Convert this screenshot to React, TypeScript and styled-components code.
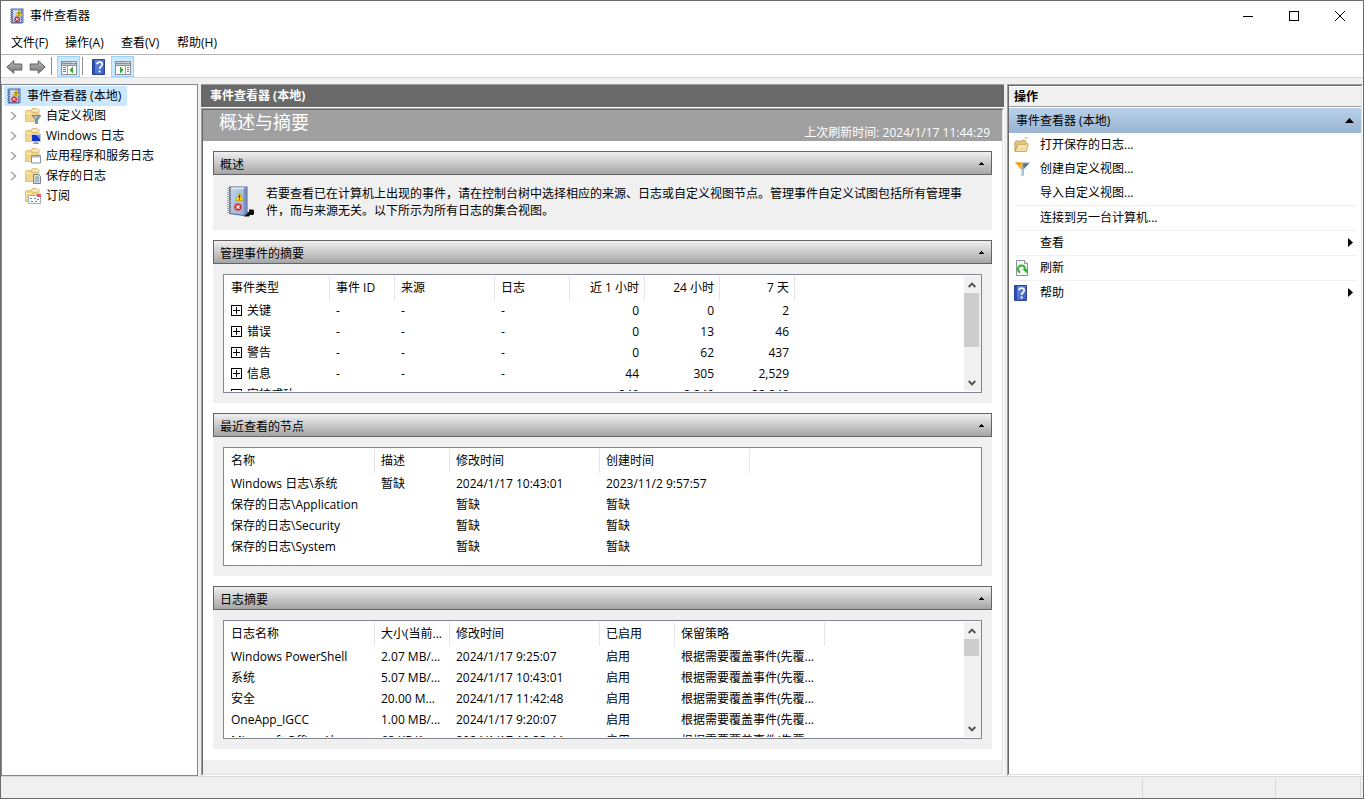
import React from "react";
import styled, { createGlobalStyle, css } from "styled-components";

const Global = createGlobalStyle`
  *, *::before, *::after { box-sizing: border-box; }
  html, body { margin: 0; padding: 0; background: #f0f0f0; }
  body, button {
    font-family: "Open Sans", "Noto Sans CJK SC", sans-serif;
    font-size: 12px;
    line-height: 16px;
    color: #000;
  }
  button { margin: 0; padding: 0; border: 0; background: none; text-align: left; cursor: default; }
  ul { margin: 0; padding: 0; list-style: none; }
  h1, h2, p { margin: 0; font-size: 12px; font-weight: 400; }
  svg { display: block; flex: none; }
`;

const Window = styled.div`
  display: flex;
  flex-direction: column;
  min-height: 100vh;
  border: 1px solid #6b6b6b;
  background: #f0f0f0;
`;

const TitleBar = styled.header`
  display: flex;
  align-items: center;
  height: 30px;
  background: #fff;
  padding-left: 8px;
`;

const Title = styled.h1`
  flex: 1;
  padding-left: 5px;
`;

const CaptionButton = styled.button`
  display: flex;
  align-items: center;
  justify-content: center;
  width: 46px;
  height: 28px;
`;

const MenuBar = styled.nav`
  display: flex;
  align-items: center;
  height: 23px;
  padding-left: 2px;
  background: #fff;
`;

const MenuItem = styled.button`
  width: 56px;
  padding-left: 8px;
  &:first-child { width: 54px; }
`;

const ToolBar = styled.div`
  display: flex;
  align-items: flex-end;
  height: 24px;
  padding-left: 2px;
  background: #fff;
  border-top: 1px solid #b4b4b4;
  border-bottom: 1px solid #dadada;
`;

const ToolButton = styled.button<{ $active?: boolean; $wide?: boolean }>`
  display: flex;
  align-items: center;
  justify-content: center;
  width: ${(p) => (p.$wide ? 24 : 23)}px;
  height: 21px;
  ${(p) => p.$active && css`
    padding-top: 3px;
    background: #cce8ff;
    border: 1px solid #99d1ff;
  `}
`;

const ToolDivider = styled.span<{ $right: number }>`
  width: 1px;
  height: 18px;
  margin: 0 ${(p) => p.$right}px 2px 2px;
  background: #8c8c8c;
`;

const Main = styled.main`
  display: grid;
  grid-template-columns: 197px minmax(0, 1fr) 355px;
  column-gap: 3px;
  flex: 1;
  padding: 6px 1px 0 0;
`;

const TreePane = styled.nav`
  padding: 1px 2px;
  background: #fff;
  border: 1px solid #828790;
`;

const TreeItem = styled.button<{ $root?: boolean }>`
  display: flex;
  align-items: center;
  height: 20px;
  gap: 5px;
  ${(p) => p.$root
    ? css`padding: 0 6px 0 2px; background: #cce8ff;`
    : css`padding: 0 4px 0 3px;`}
`;

const Twisty = styled.span`
  width: 13px;
  flex: none;
  padding-left: 3px;
`;

const CenterPane = styled.section`
  display: flex;
  flex-direction: column;
`;

const CenterTitle = styled.h1`
  height: 24px;
  padding: 3px 9px;
  background: #696969;
  border-top: 1px solid #a0a0a0;
  border-bottom: 1px solid #fff;
  color: #fff;
  font-weight: 700;
`;

const CenterBody = styled.div`
  display: flex;
  flex-direction: column;
  flex: 1;
  border: 1px solid;
  border-color: #a0a0a0 #fff #fff #a0a0a0;
`;

const CenterInner = styled.div`
  display: flex;
  flex-direction: column;
  flex: 1;
  border: 1px solid;
  border-color: #696969 #e3e3e3 #e3e3e3 #696969;
  padding-bottom: 14px;
`;

const Banner = styled.div`
  display: flex;
  justify-content: space-between;
  height: 31px;
  padding: 0 12px 0 16px;
  background: #a0a0a0;
  color: #fff;
`;

const BannerTitle = styled.h2`
  font-size: 18px;
  line-height: 24px;
`;

const BannerTime = styled.span`
  align-self: flex-end;
`;

const Sections = styled.div`
  display: flex;
  flex-direction: column;
  flex: 1;
  gap: 10px;
  padding: 10px 10px 11px;
  background: #fff;
`;

const SectionBox = styled.section`
  background: #f0f0f0;
`;

const SectionHeader = styled.button`
  display: flex;
  align-items: center;
  justify-content: space-between;
  width: 100%;
  height: 24px;
  padding: 0 7px 0 6px;
  border: 1px solid #646464;
  background: linear-gradient(#f0f0f0, #a5a5a5);
`;

const SectionTitle = styled.span`
  padding-top: 3px;
`;

const Overview = styled.div`
  display: flex;
  gap: 8px;
  height: 55px;
  padding: 10px 10px 0 13px;
  p { line-height: 17px; }
`;

const ListArea = styled.div`
  padding: 10px;
`;

const ListFrame = styled.div`
  display: flex;
  justify-content: space-between;
  height: 119px;
  padding: 1px 0 1px 1px;
  overflow: hidden;
  background: #fff;
  border: 1px solid #828790;
`;

const ListClip = styled.div`
  flex: 1;
  min-width: 0;
  overflow: hidden;
`;

const Table = styled.table`
  table-layout: fixed;
  border-collapse: separate;
  border-spacing: 0;
`;

const Th = styled.th<{ $right?: boolean }>`
  height: 24px;
  padding: 0 5px 0 6px;
  border-right: 1px solid #e5e5e5;
  font-weight: 400;
  text-align: ${(p) => (p.$right ? "right" : "left")};
  white-space: nowrap;
`;

const Td = styled.td<{ $right?: boolean }>`
  height: 21px;
  padding: 0 6px;
  text-align: ${(p) => (p.$right ? "right" : "left")};
  white-space: nowrap;
`;

const Expandable = styled.span`
  display: flex;
  align-items: flex-start;
  gap: 5px;
  svg { margin-top: 2px; }
`;

const ScrollTrack = styled.div`
  display: flex;
  flex-direction: column;
  width: 17px;
  background: #f0f0f0;
`;

const ScrollButton = styled.button`
  display: flex;
  align-items: center;
  justify-content: center;
  width: 15px;
  height: 17px;
`;

const Thumb = styled.div<{ $size: number }>`
  width: 15px;
  height: ${(p) => p.$size}px;
  margin-bottom: auto;
  background: #cdcdcd;
`;

const ActionPane = styled.aside`
  border: 1px solid;
  border-color: #a0a0a0 #fff #fff #a0a0a0;
  margin-right: -1px;
`;

const ActionInner = styled.div`
  height: 100%;
  border: 1px solid;
  border-color: #696969 #e3e3e3 #e3e3e3 #696969;
  background: #fff;
`;

const ActionTitle = styled.h2`
  height: 21px;
  padding: 2px 5px;
  background: #f0f0f0;
  border-top: 1px solid #fff;
  border-bottom: 1px solid #a0a0a0;
  font-weight: 700;
`;

const ActionGroup = styled.button`
  display: flex;
  align-items: center;
  justify-content: space-between;
  width: 100%;
  height: 25px;
  margin-top: 1px;
  padding: 0 7px;
  background: linear-gradient(#b9d1ea, #99b4d1);
`;

const ActionRow = styled.li<{ $line?: boolean }>`
  margin: 0 5px;
  ${(p) => p.$line && css`border-top: 1px solid #f0f0f0;`}
`;

const ActionButton = styled.button`
  display: flex;
  align-items: center;
  width: 100%;
  height: 24px;
  padding-right: 3px;
`;

const ActionIcon = styled.span`
  width: 26px;
  flex: none;
`;

const ActionLabel = styled.span`
  flex: 1;
`;

const StatusBar = styled.footer`
  display: flex;
  justify-content: flex-end;
  height: 22px;
  padding: 1px 2px 1px 0;
  border-top: 1px solid #d7d7d7;
`;

const StatusCell = styled.span<{ $width: number }>`
  width: ${(p) => p.$width}px;
  border-right: 1px solid #d7d7d7;
`;

const LogBook = () => (
  <svg width="16" height="16" viewBox="0 0 16 16">
    <path d="M2 .5h12.500v14L13 15.500H2z" fill="#5468a4" />
    <path d="M3 1.500h9v12.500H3z" fill="#b3cae8" />
    <path d="M12.500 1.500h1.500v12.500l-1.500.8z" fill="#8098cc" />
    <path d="M4.500 3.500h6M4.500 5.500h6M4.500 7.500h6M4.500 9.500h6M4.500 11.500h6" stroke="#dfeaf7" />
    <path d="M3.500 1v14" stroke="#5d6f9c" />
    <path d="M1 1.500h3M1 3.500h3M1 5.500h3M1 7.500h3M1 9.500h3M1 11.500h3M1 13.500h3" stroke="#8f969e" />
    <path d="M10 2l3.300 6H6.700z" fill="#ffd91a" stroke="#c7a000" strokeWidth=".6" />
    <path d="M10 4v2.300M10 6.800v.8" stroke="#332800" />
    <circle cx="8.200" cy="11.300" r="2.900" fill="#d42a34" />
    <path d="M7 10.100l2.400 2.400M9.400 10.100L7 12.500" stroke="#fff" />
  </svg>
);

const BigLogBook = () => (
  <svg width="32" height="36" viewBox="0 0 32 36">
    <defs>
      <linearGradient id="cover" x1="0" x2="1" y2="1">
        <stop stopColor="#c3d6ea" /><stop offset="1" stopColor="#8db0dc" />
      </linearGradient>
    </defs>
    <path d="M20 27.500l3-.5v-2.500h4l1 1v3.500l-1 1h-3l-1 1.500h-5z" fill="#0b0b0b" />
    <path d="M3 1.500h18.500V29l-4 2L3 29z" fill="#56669f" />
    <path d="M5 2.500h13V30L5 28.200z" fill="url(#cover)" />
    <path d="M5 2.500h15.500L17.500 4H6z" fill="#e4edf6" />
    <path d="M17.500 4l3-1.500v26l-3 1.700z" fill="#7d93c6" />
    <path d="M7 7h9M7 10h9M7 13h9M7 16h9M7 19h9M7 22h9M7 25h9" stroke="#a9c5e6" />
    <path d="M4.500 2v27" stroke="#66749a" />
    <path d="M1 3.500h4M1 5.500h4M1 7.500h4M1 9.500h4M1 11.500h4M1 13.500h4M1 15.500h4M1 17.500h4M1 19.500h4M1 21.500h4M1 23.500h4M1 25.500h4M1 27.500h4" stroke="#9da4ae" />
    <path d="M13.500 8l4 7.500h-8z" fill="#ffdc1e" stroke="#c4a000" strokeWidth=".8" strokeLinejoin="round" />
    <path d="M13.500 10.200v2.800M13.500 13.800v1" stroke="#2a2200" strokeWidth="1.300" />
    <circle cx="12" cy="22" r="4" fill="#cf2a34" stroke="#e3a4aa" strokeWidth=".6" />
    <path d="M10.400 20.400l3.200 3.200M13.600 20.400l-3.200 3.200" stroke="#fff" strokeWidth="1.300" />
  </svg>
);

const BackArrow = ({ flip }: { flip?: boolean }) => (
  <svg width="17" height="16" viewBox="0 0 17 16">
    <defs>
      <linearGradient id="arrow" x2="0" y2="1">
        <stop stopColor="#b8b8b8" /><stop offset="1" stopColor="#787878" />
      </linearGradient>
    </defs>
    <path
      d="M.8 8l7-6.300V5h8v6h-8v3.300z"
      transform={flip ? "translate(17 0) scale(-1 1)" : undefined}
      fill="url(#arrow)" stroke="#5f5f5f" strokeLinejoin="round"
    />
  </svg>
);

const PaneIcon = ({ right }: { right?: boolean }) => (
  <svg width="16" height="14" viewBox="0 0 16 14" shapeRendering="crispEdges">
    <path d="M0 0h16v14H0z" fill="#8a8f96" />
    <path d="M1 5h14v8H1z" fill="#fff" />
    <path d="M1 1h14v1H1zM1 3h14v1H1z" fill="#c3c8ce" />
    <path d="M11 1h1v1h-1zM13 1h1v1h-1z" fill="#fff" />
    <path d={right ? "M10.500 5v8" : "M6.500 5v8"} stroke="#9aa1a9" />
    <path d={right ? "M12 6.500h2M12 8.500h2M12 10.500h2" : "M2 6.500h3M2 8.500h3M2 10.500h3"} stroke="#4f80c0" />
    <path d={right ? "M5 6l4 3-4 3z" : "M12 6L8 9l4 3z"} fill="#3bab2c" />
  </svg>
);

const HelpIcon = () => (
  <svg width="14" height="16" viewBox="0 0 14 16">
    <defs>
      <linearGradient id="help" x2="1" y2="1">
        <stop stopColor="#6f93e6" /><stop offset="1" stopColor="#3558c0" />
      </linearGradient>
    </defs>
    <path d="M.5.5h12v15H.5z" fill="url(#help)" stroke="#2b459c" />
    <path d="M1 1h2v14H1z" fill="#2d4cae" />
    <path d="M5 5.200C5 2.500 10.200 2.500 10.200 5.400 10.200 7.500 7.600 7.500 7.600 10" fill="none" stroke="#fff" strokeWidth="1.700" />
    <path d="M6.600 11.500h2v2h-2z" fill="#fff" />
  </svg>
);

type Overlay = "filter" | "monitor" | "window" | "doc" | "calendar";

const overlays: Record<Overlay, React.ReactNode> = {
  filter: (
    <>
      <path d="M7 7.500h9l-3.500 4v4L10.500 16v-4.500z" fill="#7c96ae" stroke="#566e86" strokeWidth=".6" />
      <path d="M9 8.500h3.500l-1.500 2z" fill="#d9e5ee" />
    </>
  ),
  monitor: (
    <>
      <path d="M6 6h10v8H6z" fill="#c4ccd4" />
      <path d="M7 7h8v6H7z" fill="#1430c8" />
      <path d="M11 7h4v4z" fill="#6f92f0" />
      <path d="M9 14h4v1h1v1H8v-1h1z" fill="#9aa0a6" />
    </>
  ),
  window: (
    <>
      <path d="M6.500 7.500h9v7.500h-9z" fill="#fff" stroke="#8a9096" />
      <path d="M7 8h8v1.500H7z" fill="#aeb9c4" />
    </>
  ),
  doc: (
    <>
      <path d="M8.500 6.500h5l2 2v7h-7z" fill="#cfdae2" stroke="#7a868f" />
      <path d="M10 9h4M10 11h4M10 13h4" stroke="#7a868f" strokeWidth=".8" />
    </>
  ),
  calendar: (
    <>
      <path d="M3.500 7.500h12v8h-12z" fill="#fff" stroke="#a4adb4" />
      <path d="M12 6h4v3h-4z" fill="#e0606a" />
      <path d="M5 10.500h2M9 10.500h2M12 11.500h2M6 13.500h2M10 13.500h2" stroke="#4c8fb8" />
    </>
  ),
};

const FolderIcon = ({ overlay }: { overlay: Overlay }) => (
  <svg width="16" height="16" viewBox="0 0 16 16">
    <path d="M6.500 1.500l1-1h4l1 1H14v10H6.500z" fill="#f3d998" stroke="#d9b76a" strokeWidth=".8" />
    <path d="M8 2.500h5" stroke="#fffbe6" />
    <path d="M.5 3.500l1-1h4l1.500 2H12v9H.5z" fill="#f2d58a" stroke="#dcba6c" strokeWidth=".8" />
    <path d="M1 5.500h5.500" stroke="#fbeec0" />
    {overlays[overlay]}
  </svg>
);

const OpenFolder = () => (
  <svg width="16" height="16" viewBox="0 0 16 16">
    <path d="M10.500 1h3.500" stroke="#7fd07f" />
    <path d="M.8 5.500l1-1.500h3.500l1 1H7V3.500h4l1 1v4H3l-2 5.500z" fill="#e3c57c" stroke="#bf9c50" strokeWidth=".8" />
    <path d="M3.500 8h7l.8-1.200h3L12.500 14.500H1.200z" fill="#f3dca0" stroke="#bf9c50" strokeWidth=".8" strokeLinejoin="round" />
    <path d="M4 9h7" stroke="#fff5d4" />
  </svg>
);

const FilterIcon = () => (
  <svg width="16" height="16" viewBox="0 0 16 16">
    <path d="M1 1.500h15L10 8v6l-2.500 1.500V8z" fill="#8aa5bc" />
    <path d="M9 2.500h6L10 7.500z" fill="#54728e" />
    <path d="M8.300 8h1v6l-1 .6z" fill="#d5e4f0" />
    <path d="M1 1.500h7.500L8 7.500H6z" fill="#ffb81c" />
    <path d="M2 1.500h4.500v2.500H4z" fill="#ff9a00" />
  </svg>
);

const RefreshIcon = () => (
  <svg width="16" height="16" viewBox="0 0 16 16">
    <path d="M2.500.5h8l3 3v12h-11z" fill="#f7f7f7" stroke="#8c9196" />
    <path d="M10.500.5v3h3" fill="#fff" stroke="#8c9196" />
    <path d="M6.200 12.300A3.500 3.500 0 1 1 11 9" fill="none" stroke="#35b335" strokeWidth="2" />
    <path d="M8.300 9h5v4.500z" fill="#35b335" />
  </svg>
);

const SmallUp = () => (
  <svg width="5" height="3" viewBox="0 0 5 3" shapeRendering="crispEdges">
    <path d="M2 0h1v1h1v1h1v1H0V2h1V1h1z" />
  </svg>
);

const PlusBox = () => (
  <svg width="11" height="11" viewBox="0 0 11 11" shapeRendering="crispEdges">
    <path d="M.5.5h10v10H.5zM2 5.500h7M5.500 2v7" fill="none" stroke="#000" />
  </svg>
);

const ScrollArrow = ({ down }: { down?: boolean }) => (
  <svg width="8" height="6" viewBox="0 0 8 6">
    <path d={down ? "M.7 1L4 4.300 7.300 1" : "M.7 5L4 1.700 7.300 5"} fill="none" stroke="#505050" strokeWidth="1.900" />
  </svg>
);

const RightTriangle = () => (
  <svg width="5" height="10" viewBox="0 0 5 10"><path d="M0 0l5 4.500L0 9z" /></svg>
);

const Section = ({ title, children }: { title: string; children: React.ReactNode }) => (
  <SectionBox>
    <SectionHeader><SectionTitle>{title}</SectionTitle><SmallUp /></SectionHeader>
    {children}
  </SectionBox>
);

interface Column { label: string; width: number; right?: boolean }

interface ListProps { columns: Column[]; rows: string[][]; expandable?: boolean; thumb?: number }

const List = ({ columns, rows, expandable, thumb }: ListProps) => (
  <ListArea>
    <ListFrame>
      <ListClip>
        <Table style={{ width: columns.reduce((sum, c) => sum + c.width, 0) }}>
          <colgroup>
            {columns.map((c) => <col key={c.label} style={{ width: c.width }} />)}
          </colgroup>
          <thead>
            <tr>{columns.map((c) => <Th key={c.label} scope="col" $right={c.right}>{c.label}</Th>)}</tr>
          </thead>
          <tbody>
            {rows.map((row) => (
              <tr key={row[0]}>
                {row.map((cell, i) => (
                  <Td key={columns[i].label} $right={columns[i].right}>
                    {expandable && i === 0 ? <Expandable><PlusBox />{cell}</Expandable> : cell}
                  </Td>
                ))}
              </tr>
            ))}
          </tbody>
        </Table>
      </ListClip>
      {thumb && (
        <ScrollTrack>
          <ScrollButton aria-label="向上滚动"><ScrollArrow /></ScrollButton>
          <Thumb $size={thumb} />
          <ScrollButton aria-label="向下滚动"><ScrollArrow down /></ScrollButton>
        </ScrollTrack>
      )}
    </ListFrame>
  </ListArea>
);

const eventColumns: Column[] = [
  { label: "事件类型", width: 105 },
  { label: "事件 ID", width: 65 },
  { label: "来源", width: 100 },
  { label: "日志", width: 75 },
  { label: "近 1 小时", width: 75, right: true },
  { label: "24 小时", width: 75, right: true },
  { label: "7 天", width: 75, right: true },
];

const eventRows = [
  ["关键", "-", "-", "-", "0", "0", "2"],
  ["错误", "-", "-", "-", "0", "13", "46"],
  ["警告", "-", "-", "-", "0", "62", "437"],
  ["信息", "-", "-", "-", "44", "305", "2,529"],
  ["审核成功", "-", "-", "-", "240", "2,240", "22,240"],
];

const nodeColumns: Column[] = [
  { label: "名称", width: 150 },
  { label: "描述", width: 75 },
  { label: "修改时间", width: 150 },
  { label: "创建时间", width: 150 },
];

const nodeRows = [
  ["Windows 日志\\系统", "暂缺", "2024/1/17 10:43:01", "2023/11/2 9:57:57"],
  ["保存的日志\\Application", "", "暂缺", "暂缺"],
  ["保存的日志\\Security", "", "暂缺", "暂缺"],
  ["保存的日志\\System", "", "暂缺", "暂缺"],
];

const logColumns: Column[] = [
  { label: "日志名称", width: 150 },
  { label: "大小(当前...", width: 75 },
  { label: "修改时间", width: 150 },
  { label: "已启用", width: 75 },
  { label: "保留策略", width: 150 },
];

const policy = "根据需要覆盖事件(先覆...";

const logRows = [
  ["Windows PowerShell", "2.07 MB/...", "2024/1/17 9:25:07", "启用", policy],
  ["系统", "5.07 MB/...", "2024/1/17 10:43:01", "启用", policy],
  ["安全", "20.00 M...", "2024/1/17 11:42:48", "启用", policy],
  ["OneApp_IGCC", "1.00 MB/...", "2024/1/17 9:20:07", "启用", policy],
  ["Microsoft Office Al...", "68 KB/1....", "2024/1/17 10:33:44", "启用", policy],
];

const treeItems: { label: string; overlay: Overlay; leaf?: boolean }[] = [
  { label: "自定义视图", overlay: "filter" },
  { label: "Windows 日志", overlay: "monitor" },
  { label: "应用程序和服务日志", overlay: "window" },
  { label: "保存的日志", overlay: "doc" },
  { label: "订阅", overlay: "calendar", leaf: true },
];

const actions: { label: string; icon?: React.ReactNode; line?: boolean; more?: boolean }[] = [
  { label: "打开保存的日志...", icon: <OpenFolder /> },
  { label: "创建自定义视图...", icon: <FilterIcon /> },
  { label: "导入自定义视图..." },
  { label: "连接到另一台计算机...", line: true },
  { label: "查看", line: true, more: true },
  { label: "刷新", icon: <RefreshIcon />, line: true },
  { label: "帮助", icon: <HelpIcon />, line: true, more: true },
];

export default function App() {
  return (
    <>
      <Global />
      <Window>
        <TitleBar>
          <LogBook />
          <Title>事件查看器</Title>
          <CaptionButton aria-label="最小化">
            <svg width="10" height="10" shapeRendering="crispEdges"><path d="M0 5.500h10" stroke="#000" /></svg>
          </CaptionButton>
          <CaptionButton aria-label="最大化">
            <svg width="10" height="10" shapeRendering="crispEdges"><path d="M.5.5h9v9h-9z" fill="none" stroke="#000" /></svg>
          </CaptionButton>
          <CaptionButton aria-label="关闭">
            <svg width="10" height="10"><path d="M0 0l10 10M10 0L0 10" stroke="#000" /></svg>
          </CaptionButton>
        </TitleBar>
        <MenuBar>
          {["文件(F)", "操作(A)", "查看(V)", "帮助(H)"].map((m) => <MenuItem key={m}>{m}</MenuItem>)}
        </MenuBar>
        <ToolBar>
          <ToolButton aria-label="后退"><BackArrow /></ToolButton>
          <ToolButton aria-label="前进"><BackArrow flip /></ToolButton>
          <ToolDivider $right={5} />
          <ToolButton $active aria-label="显示控制台树"><PaneIcon /></ToolButton>
          <ToolDivider $right={4} />
          <ToolButton $wide aria-label="帮助"><HelpIcon /></ToolButton>
          <ToolButton $active aria-label="显示操作窗格"><PaneIcon right /></ToolButton>
        </ToolBar>
        <Main>
          <TreePane>
            <TreeItem $root><LogBook />事件查看器 (本地)</TreeItem>
            {treeItems.map((t) => (
              <TreeItem key={t.label}>
                <Twisty>
                  {!t.leaf && (
                    <svg width="7" height="10" viewBox="0 0 7 10">
                      <path d="M1 1l4.500 4L1 9" fill="none" stroke="#a6a6a6" strokeWidth="1.600" />
                    </svg>
                  )}
                </Twisty>
                <FolderIcon overlay={t.overlay} />
                {t.label}
              </TreeItem>
            ))}
          </TreePane>
          <CenterPane>
            <CenterTitle>事件查看器 (本地)</CenterTitle>
            <CenterBody>
              <CenterInner>
                <Banner>
                  <BannerTitle>概述与摘要</BannerTitle>
                  <BannerTime>上次刷新时间: 2024/1/17 11:44:29</BannerTime>
                </Banner>
                <Sections>
                  <Section title="概述">
                    <Overview>
                      <BigLogBook />
                      <p>
                        若要查看已在计算机上出现的事件，请在控制台树中选择相应的来源、日志或自定义视图节点。管理事件自定义试图包括所有管理事件，而与来源无关。以下所示为所有日志的集合视图。
                      </p>
                    </Overview>
                  </Section>
                  <Section title="管理事件的摘要">
                    <List columns={eventColumns} rows={eventRows} expandable thumb={54} />
                  </Section>
                  <Section title="最近查看的节点">
                    <List columns={nodeColumns} rows={nodeRows} />
                  </Section>
                  <Section title="日志摘要">
                    <List columns={logColumns} rows={logRows} thumb={17} />
                  </Section>
                </Sections>
              </CenterInner>
            </CenterBody>
          </CenterPane>
          <ActionPane>
            <ActionInner>
              <ActionTitle>操作</ActionTitle>
              <ActionGroup>
                事件查看器 (本地)
                <svg width="9" height="5" viewBox="0 0 9 5"><path d="M0 5l4.500-5L9 5z" /></svg>
              </ActionGroup>
              <ul>
                {actions.map((a) => (
                  <ActionRow key={a.label} $line={a.line}>
                    <ActionButton>
                      <ActionIcon>{a.icon}</ActionIcon>
                      <ActionLabel>{a.label}</ActionLabel>
                      {a.more && <RightTriangle />}
                    </ActionButton>
                  </ActionRow>
                ))}
              </ul>
            </ActionInner>
          </ActionPane>
        </Main>
        <StatusBar>
          <StatusCell $width={1} />
          <StatusCell $width={133} />
          <StatusCell $width={85} />
        </StatusBar>
      </Window>
    </>
  );
}
